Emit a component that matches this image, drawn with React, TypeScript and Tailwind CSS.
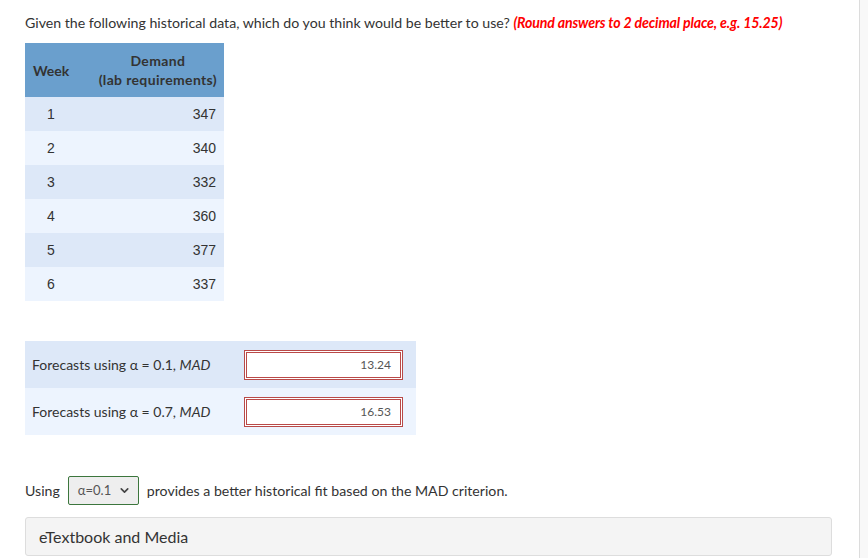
import { ChevronDown } from "lucide-react";

const rows = [
  { week: 1, demand: 347 },
  { week: 2, demand: 340 },
  { week: 3, demand: 332 },
  { week: 4, demand: 360 },
  { week: 5, demand: 377 },
  { week: 6, demand: 337 },
];

const forecasts = [
  { alpha: "0.1", mad: "13.24" },
  { alpha: "0.7", mad: "16.53" },
];

export default function App() {
  return (
    <div className="flex min-h-[558px] w-full bg-[#f8f8f8] font-['Lato','Noto_Sans',sans-serif] text-[#333]">
      <div className="w-[860px] shrink-0 border-r border-[#dcdcdc] bg-white pl-[25px] pt-[13px]">
        <p className="text-[14.15px] leading-[20px]">
          Given the following historical data, which do you think would be better to use?{" "}
          <span className="font-bold italic tracking-[-0.13px] text-[#ff0000]">
            (Round answers to 2 decimal place, e.g. 15.25)
          </span>
        </p>

        <table className="mt-[10px] w-[199px] border-collapse text-[14px]">
          <thead>
            <tr className="h-[54px] bg-[#6a9fcd] font-bold">
              <th className="w-[52px] pl-[8px] text-left font-bold">Week</th>
              <th className="pr-[7px] text-right font-bold leading-[19px]">
                <div className="flex flex-col items-end">
                  <div className="flex flex-col items-center tracking-[0.35px]">
                    <span>Demand</span>
                    <span>(lab requirements)</span>
                  </div>
                </div>
              </th>
            </tr>
          </thead>
          <tbody className="font-['Liberation_Sans',Arial,sans-serif]">
            {rows.map((r, i) => (
              <tr key={r.week} className={`h-[34px] ${i % 2 === 0 ? "bg-[#dde8f8]" : "bg-[#edf4fe]"}`}>
                <td className="text-center">{r.week}</td>
                <td className="pr-[8px] text-right">{r.demand}</td>
              </tr>
            ))}
          </tbody>
        </table>

        <table className="mt-[40px] w-[391px] border-collapse text-[14px]">
          <tbody>
            {forecasts.map((f, i) => (
              <tr key={f.alpha} className={`h-[47px] ${i === 0 ? "bg-[#dde8f8]" : "bg-[#edf4fe]"}`}>
                <td className="pl-[7px]">
                  Forecasts using α = {f.alpha}, <i>MAD</i>
                </td>
                <td className="w-[172px] pr-[13px]">
                  <div className="flex h-[30px] w-[159px] items-center justify-end border-[3px] border-double border-[#b94a48] bg-white pr-[9px] text-[12px] text-[#555]">
                    {f.mad}
                  </div>
                </td>
              </tr>
            ))}
          </tbody>
        </table>

        <div className="mt-[41px] flex items-center text-[14.15px]">
          <span>Using</span>
          <div className="mx-[8px] flex h-[29px] w-[71px] items-center justify-between rounded-[2px] border border-[#3c763d] bg-[#eeeeee] pl-[9px] pr-[7px] text-[13px] text-[#555]">
            <span>α=0.1</span>
            <ChevronDown size={13} strokeWidth={3} className="text-[#444]" />
          </div>
          <span>provides a better historical fit based on the MAD criterion.</span>
        </div>

        <div className="mt-[12px] flex h-[39px] w-[807px] items-center rounded-[3px] border border-[#dddddd] bg-[#f4f4f4] pl-[13px] text-[16px]">
          eTextbook and Media
        </div>
      </div>
    </div>
  );
}
